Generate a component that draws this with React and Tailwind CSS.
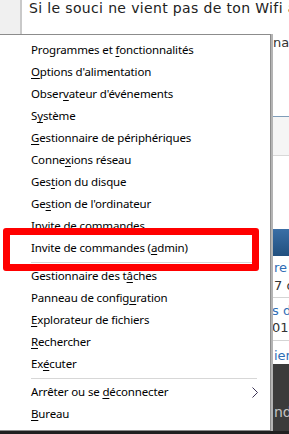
import React from "react";

const items = [
  [["Programmes et ", "f", "onctionnalités"]],
  [["", "O", "ptions d'alimentation"]],
  [["Obser", "v", "ateur d'événements"]],
  [["S", "y", "stème"]],
  [["", "G", "estionnaire de périphériques"]],
  [["Conne", "x", "ions réseau"]],
  [["Ges", "t", "ion du disque"]],
  [["Ge", "s", "tion de l'ordinateur"]],
  [["Invite de ", "c", "ommandes"]],
  [["Invite de commandes (", "a", "dmin)"]],
  "sep",
  [["Gestionnaire des t", "â", "ches"]],
  [["Panneau de config", "u", "ration"]],
  [["", "E", "xplorateur de fichiers"]],
  [["", "R", "echercher"]],
  [["Ex", "é", "cuter"]],
  "sep",
  [["Arrêter ou se ", "d", "éconnecter"], true],
  [["", "B", "ureau"]],
];

function MenuItem({ label, sub }) {
  const [before, key, after] = label;
  return (
    <div className="flex h-[22px] items-center pl-[31px] pr-[12px] text-[11.5px] tracking-[-0.15px] text-black">
      <span className="flex-1 whitespace-nowrap">
        {before}
        <span className="underline decoration-1 underline-offset-[2px]">{key}</span>
        {after}
      </span>
      {sub && (
        <svg width="6" height="11" viewBox="0 0 6 11">
          <polyline points="0.5,0.5 5.5,5.5 0.5,10.5" fill="none" stroke="#3b3355" strokeWidth="1" />
        </svg>
      )}
    </div>
  );
}

function WinXMenu() {
  return (
    <div className="absolute left-[-1px] top-[34px] h-[397px] w-[272px] border border-[#8c8c8c] bg-white pt-[4px] shadow-[2px_0_0_#b4b4b4] font-['Noto_Sans',sans-serif]">
      {items.map((it, i) =>
        it === "sep" ? (
          <div key={i} className="flex h-[6px] items-center pl-[31px] pr-[13px]">
            <div className="h-px flex-1 bg-[#d7d7d7]" />
          </div>
        ) : (
          <MenuItem key={i} label={it[0]} sub={it[1]} />
        )
      )}
    </div>
  );
}

export default function App() {
  return (
    <div className="relative h-[434px] w-[289px] overflow-hidden bg-white font-['DejaVu_Sans',sans-serif]">
      <div className="flex h-[431px] flex-col">
        <div className="flex h-[34px]">
          <div className="w-[22px] shrink-0 border-r-2 border-[#c9c9c9] bg-[#f0f0f0]" />
          <p className="whitespace-nowrap pl-[7px] text-[14px] leading-[17px] tracking-[0.35px] text-[#222]">
            Si le souci ne vient pas de ton Wifi alors vérifie ta carte réseau
          </p>
        </div>
        <div className="flex flex-1">
          <div className="w-[271px] shrink-0" />
          <aside className="flex flex-1 flex-col overflow-hidden whitespace-nowrap text-[13px]">
            <div className="h-[18px] pl-[2px] leading-[18px] text-[#333]">nar</div>
            <div className="h-[64px]" />
            <div className="h-[40px] border-y border-t-[#7f9db9] border-b-[#d8d8d8] bg-[#f5f5f5]" />
            <div className="h-[73px]" />
            <div className="h-[27px] bg-gradient-to-b from-[#3b6fa6] to-[#22507f]" />
            <div className="flex h-[42px] flex-col justify-center border-b border-[#d4d4d4] pl-[3px] text-[13px] leading-[18px]">
              <span className="text-[#2f6db5]">re <span className="bg-[#f5e27a]">p</span></span>
              <span className="text-[#333]">7 d</span>
            </div>
            <div className="flex h-[43px] flex-col justify-center border-b border-[#d4d4d4] pl-[1px] text-[13px] leading-[17px]">
              <span className="text-[#2f6db5]">s du</span>
              <span className="text-[#333]">015</span>
            </div>
            <div className="h-[23px] pl-[3px] pt-[6px] text-[13px] leading-[17px] text-[#2f6db5]">ier</div>
            <div className="flex flex-1 items-end bg-[#3b3b3b] pb-[8px] pl-[3px] text-[14px] text-[#c4c4c4]">nd</div>
          </aside>
        </div>
      </div>
      <div className="h-[3px] bg-[#202020]" />
      <WinXMenu />
      <div className="absolute left-[3px] top-[228px] h-[43px] w-[256px] rounded-[3px] border-[7px] border-[#ff0000]" />
    </div>
  );
}
